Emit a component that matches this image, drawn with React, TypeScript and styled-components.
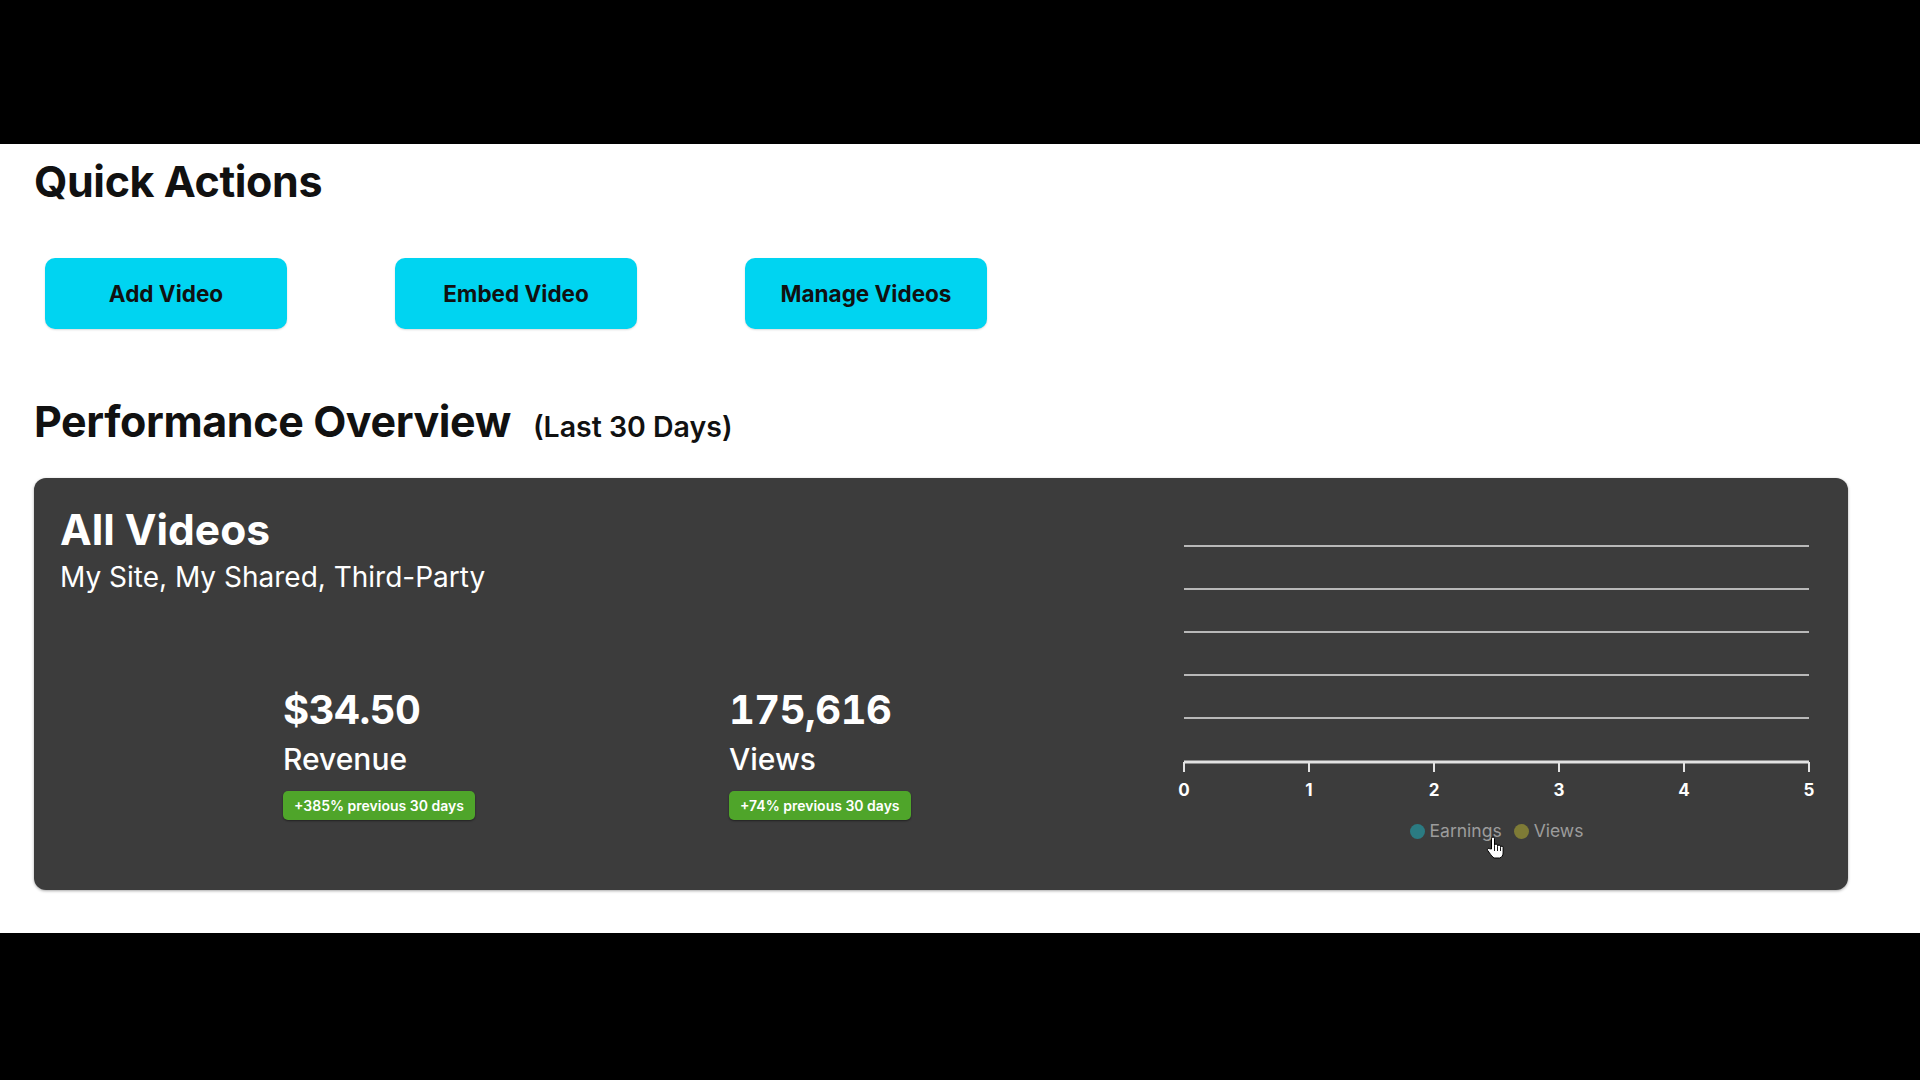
import React from "react";
import styled, { createGlobalStyle } from "styled-components";

const GlobalStyle = createGlobalStyle`
  html, body {
    margin: 0;
    padding: 0;
    background: #000;
    font-family: Inter, "Noto Sans", "Liberation Sans", sans-serif;
  }
  * { box-sizing: border-box; }
`;

const Screen = styled.div`
  height: 1080px;
  padding-top: 144px;
  background: #000;
  overflow: hidden;
`;

const Page = styled.main`
  height: 789px;
  background: #fff;
  padding: 12px 0 0 34px;
`;

const SectionTitle = styled.h2`
  margin: 0;
  font-size: 43px;
  line-height: 50px;
  font-weight: 700;
  color: #111;
  letter-spacing: -0.4px;
`;

const ActionRow = styled.div`
  display: flex;
  gap: 108px;
  margin-top: 52px;
  padding-left: 11px;
`;

const ActionButton = styled.button`
  width: 242px;
  height: 71px;
  border: none;
  border-radius: 10px;
  background: #00d4f1;
  color: #111;
  font-family: inherit;
  font-size: 22.5px;
  font-weight: 700;
  box-shadow: 0 1px 2px rgba(0, 0, 0, 0.15);
  cursor: pointer;
`;

const OverviewHeading = styled.div`
  display: flex;
  align-items: baseline;
  gap: 22px;
  margin-top: 67px;
`;

const Period = styled.span`
  font-size: 28.5px;
  font-weight: 600;
  color: #111;
`;

const Card = styled.section`
  display: flex;
  width: 1814px;
  height: 412px;
  margin-top: 32px;
  padding: 28px 29px 0 26px;
  border-radius: 12px;
  background: #3c3c3c;
  box-shadow: 0 1px 3px rgba(0, 0, 0, 0.35);
  color: #fff;
`;

const Summary = styled.div`
  flex: 1;
`;

const CardTitle = styled.h3`
  margin: 0;
  font-size: 42.5px;
  line-height: 48px;
  font-weight: 700;
`;

const CardSubtitle = styled.div`
  margin-top: 7px;
  font-size: 28px;
  line-height: 32px;
`;

const StatsRow = styled.div`
  display: grid;
  grid-template-columns: 446px 1fr;
  margin-top: 92px;
  padding-left: 223px;
`;

const Stat = styled.div`
  display: flex;
  flex-direction: column;
  align-items: flex-start;
`;

const StatValue = styled.div`
  font-size: 40px;
  line-height: 49px;
  font-weight: 700;
  letter-spacing: -0.5px;
  font-variant-numeric: tabular-nums;
`;

const StatLabel = styled.div`
  margin-top: 7px;
  font-size: 30px;
  line-height: 36px;
  font-weight: 500;
`;

const Badge = styled.span`
  margin-top: 14px;
  height: 29px;
  padding: 0 11px;
  display: inline-flex;
  align-items: center;
  border-radius: 5px;
  background: #4fa52a;
  box-shadow: 0 1px 2px rgba(0, 0, 0, 0.45);
  font-size: 14px;
  font-weight: 600;
`;

const ChartColumn = styled.div`
  position: relative;
  width: 645px;
  padding-top: 30px;
`;

const ChartSvg = styled.svg`
  display: block;
`;

const Legend = styled.div`
  display: flex;
  justify-content: center;
  gap: 12px;
  margin-top: 19px;
`;

const LegendItem = styled.div`
  display: flex;
  align-items: center;
  gap: 5px;
  font-size: 17.5px;
  line-height: 20px;
  color: #9c9c9c;
`;

const Dot = styled.span<{ $color: string }>`
  width: 15px;
  height: 15px;
  border-radius: 50%;
  background: ${(p) => p.$color};
`;

// mouse pointer resting over the legend
const Pointer = styled.svg`
  position: absolute;
  left: 311px;
  top: 330px;
`;

const gridRows = [10, 53, 96, 139, 182];
const ticks = [0, 1, 2, 3, 4, 5];
const plotLeft = 10;
const plotRight = 635;
const axisY = 226;

const Chart = () => (
  <ChartSvg width={645} height={266} viewBox="0 0 645 266">
    {gridRows.map((y) => (
      <line key={y} x1={plotLeft} x2={plotRight} y1={y} y2={y} stroke="#b8b8b8" strokeWidth={2} />
    ))}
    <line x1={plotLeft} x2={plotRight} y1={axisY} y2={axisY} stroke="#e2e2e2" strokeWidth={3} />
    {ticks.map((t) => {
      const x = plotLeft + ((plotRight - plotLeft) / 5) * t;
      return (
        <g key={t}>
          <line x1={x} x2={x} y1={axisY} y2={axisY + 10} stroke="#e2e2e2" strokeWidth={2} />
          <text
            x={x}
            y={260}
            textAnchor="middle"
            fill="#fff"
            fontSize={17}
            fontWeight={700}
            fontFamily="Inter, sans-serif"
          >
            {t}
          </text>
        </g>
      );
    })}
  </ChartSvg>
);

export default function App() {
  return (
    <>
      <GlobalStyle />
      <Screen>
        <Page>
          <SectionTitle>Quick Actions</SectionTitle>
          <ActionRow>
            <ActionButton>Add Video</ActionButton>
            <ActionButton>Embed Video</ActionButton>
            <ActionButton>Manage Videos</ActionButton>
          </ActionRow>

          <OverviewHeading>
            <SectionTitle>Performance Overview</SectionTitle>
            <Period>(Last 30 Days)</Period>
          </OverviewHeading>

          <Card>
            <Summary>
              <CardTitle>All Videos</CardTitle>
              <CardSubtitle>My Site, My Shared, Third-Party</CardSubtitle>
              <StatsRow>
                <Stat>
                  <StatValue>$34.50</StatValue>
                  <StatLabel>Revenue</StatLabel>
                  <Badge>+385% previous 30 days</Badge>
                </Stat>
                <Stat>
                  <StatValue>175,616</StatValue>
                  <StatLabel>Views</StatLabel>
                  <Badge>+74% previous 30 days</Badge>
                </Stat>
              </StatsRow>
            </Summary>

            <ChartColumn>
              <Chart />
              <Legend>
                <LegendItem>
                  <Dot $color="#2b7b82" />
                  Earnings
                </LegendItem>
                <LegendItem>
                  <Dot $color="#7e7b36" />
                  Views
                </LegendItem>
              </Legend>
              <Pointer width="20" height="24" viewBox="0 0 20 24">
                <path
                  d="M6.5 13V2.5a1.5 1.5 0 0 1 3 0V9.5a1.5 1.5 0 0 1 3 0v1a1.5 1.5 0 0 1 3 0v1a1.3 1.3 0 0 1 2.6 0V17c0 2.5-1.5 4.5-3.5 5H9c-1.5-1-3-3-4.5-5L2.6 14.3a1.3 1.3 0 0 1 2-1.6Z"
                  fill="#fff"
                  stroke="#000"
                  strokeWidth={1}
                  strokeLinejoin="round"
                />
                <path d="M9.5 10v5M12.5 11v4M15.5 12v3" stroke="#000" strokeWidth={0.9} />
              </Pointer>
            </ChartColumn>
          </Card>
        </Page>
      </Screen>
    </>
  );
}
